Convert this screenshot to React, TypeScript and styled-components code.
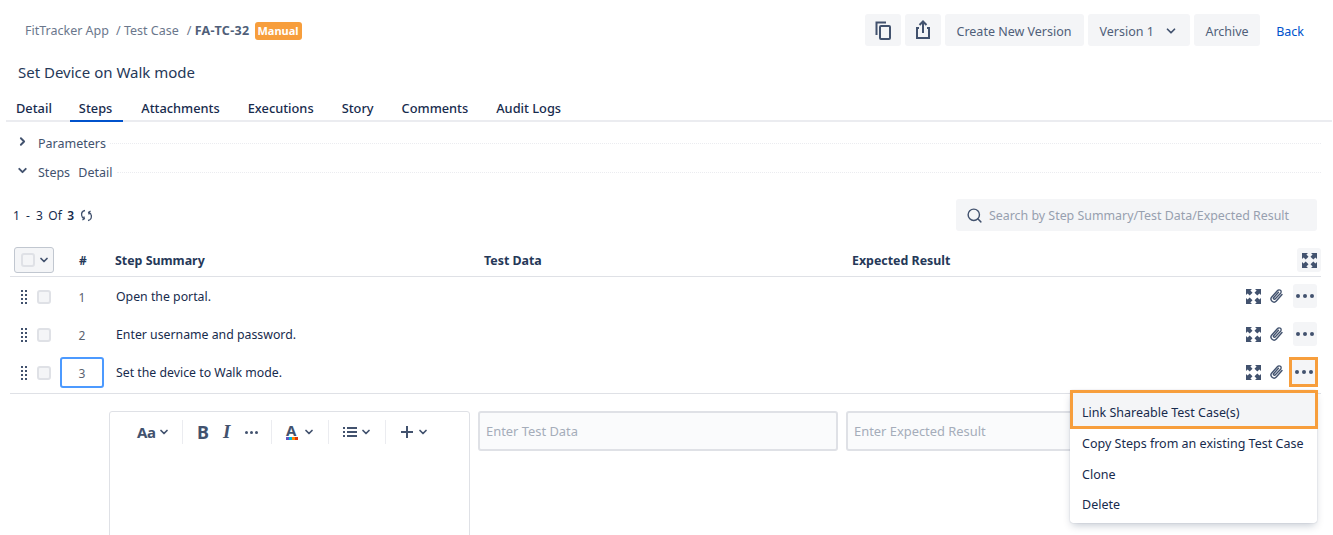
import React from "react";
import styled, { createGlobalStyle } from "styled-components";
import { ChevronDown, ChevronRight, Search } from "lucide-react";

const STEPS = ["Open the portal.", "Enter username and password.", "Set the device to Walk mode."];
const TABS = ["Detail", "Steps", "Attachments", "Executions", "Story", "Comments", "Audit Logs"];
const MENU = ["Link Shareable Test Case(s)", "Copy Steps from an existing Test Case", "Clone", "Delete"];
const COLOR_BAR = ["#6554c0", "#00b8d9", "#ff8b00", "#de350b"];

const CopyIcon = () => (
  <svg width="16" height="19" viewBox="0 0 16 19" fill="none" stroke="#42526e" strokeWidth="2">
    <rect x="5" y="5" width="10" height="13" rx="1" />
    <path d="M1.500 14V1.500H11" />
  </svg>
);

const ShareIcon = () => (
  <svg width="18" height="20" viewBox="0 0 18 20" fill="none" stroke="#42526e" strokeWidth="2">
    <path d="M5 8H3v10h12V8h-2" />
    <path d="M9 13V2M5.500 5L9 1.500 12.500 5" />
  </svg>
);

const ExpandIcon = () => (
  <svg width="15" height="15" viewBox="0 0 15 15" fill="#42526e">
    <path d="M0 0h6L4.400 1.600 6.500 3.700 3.700 6.500 1.600 4.400 0 6zM15 0v6l-1.600-1.600-2.100 2.100-2.800-2.800 2.100-2.100L9 0zM0 15V9l1.600 1.600 2.100-2.100 2.800 2.800-2.100 2.100L6 15zM15 15H9l1.600-1.600-2.100-2.100 2.800-2.800 2.100 2.100L15 9z" />
  </svg>
);

const ClipIcon = () => (
  <svg width="15" height="16" viewBox="0 0 14 16" fill="none" stroke="#42526e" strokeWidth="1.4" strokeLinecap="round">
    <path d="M12.500 6.500L6.800 13a3 3 0 0 1-4.500-4l5.800-6.500a2 2 0 0 1 3 2.700L5.600 11a1 1 0 0 1-1.500-1.300L9 4.200" />
  </svg>
);

const RefreshIcon = () => (
  <svg width="13" height="13" viewBox="0 0 13 13" fill="none" stroke="#42526e" strokeWidth="1.3">
    <path d="M5 1.500C2.500 2 1.200 4 1.700 6.500c.2 1.400 1 2.500 2.300 3.200M2.400 11l2-1.200-.6-2.300" />
    <path d="M8 11.500c2.500-.5 3.800-2.500 3.300-5-.2-1.400-1-2.500-2.300-3.200M10.600 2L8.600 3.200l.6 2.300" />
  </svg>
);

const ListIcon = () => (
  <svg width="14" height="12" viewBox="0 0 14 12" fill="#42526e">
    <path d="M0 1h2v2H0zM4 1h10v2H4zM0 5h2v2H0zM4 5h10v2H4zM0 9h2v2H0zM4 9h10v2H4z" />
  </svg>
);

const PlusIcon = () => (
  <svg width="14" height="14" viewBox="0 0 14 14" fill="#42526e">
    <path d="M6 1h2v5h5v2H8v5H6V8H1V6h5z" />
  </svg>
);

const App: React.FC = () => {
  return (
    <Page>
      <GlobalStyle />
      <TopBar>
        <Crumbs>
          <Crumb>FitTracker App</Crumb>
          <Crumb>/ Test Case</Crumb>
          <CrumbKey>
            <span>/</span> <b>FA-TC-32</b>
          </CrumbKey>
          <Badge>Manual</Badge>
        </Crumbs>
        <Actions>
          <IconButton>
            <CopyIcon />
          </IconButton>
          <IconButton>
            <ShareIcon />
          </IconButton>
          <Button>Create New Version</Button>
          <Button>
            Version 1
            <ChevronDown size={14} strokeWidth={3} color="#42526e" style={{ marginLeft: 10 }} />
          </Button>
          <ArchiveButton>Archive</ArchiveButton>
          <BackLink>Back</BackLink>
        </Actions>
      </TopBar>

      <Title>Set Device on Walk mode</Title>

      <Tabs>
        {TABS.map((tab) => (
          <Tab key={tab} $active={tab === "Steps"}>
            {tab}
          </Tab>
        ))}
      </Tabs>

      <Section $top={11}>
        <ChevronRight size={13} strokeWidth={3.5} color="#42526e" />
        <SectionName>Parameters</SectionName>
        <SectionRule />
      </Section>
      <Section $top={9}>
        <ChevronDown size={13} strokeWidth={3.5} color="#42526e" />
        <SectionName>Steps Detail</SectionName>
        <SectionRule />
      </Section>

      <ListBar>
        <Pager>
          <span>1 - 3</span>
          <span>Of</span>
          <b>3</b>
          <RefreshIcon />
        </Pager>
        <SearchBox>
          <Search size={17} color="#42526e" strokeWidth={2} />
          <span>Search by Step Summary/Test Data/Expected Result</span>
        </SearchBox>
      </ListBar>

      <Table>
        <HeadRow>
          <SelectAll>
            <Check />
            <ChevronDown size={12} strokeWidth={3.5} color="#42526e" />
          </SelectAll>
          <HeadNumber>#</HeadNumber>
          <HeadCell>Step Summary</HeadCell>
          <HeadCell>Test Data</HeadCell>
          <HeadCell>Expected Result</HeadCell>
          <HeadExpand>
            <ExpandIcon />
          </HeadExpand>
        </HeadRow>

        {STEPS.map((step, i) => {
          const last = i === STEPS.length - 1;
          return (
            <StepRow key={step} $last={last}>
              <Lead>
                <Grip />
                <Check />
              </Lead>
              <Number $active={last}>{i + 1}</Number>
              <Summary>{step}</Summary>
              <RowTools>
                <ExpandIcon />
                <ClipIcon />
                <MoreButton $highlight={last}>
                  <Dot />
                  <Dot />
                  <Dot />
                </MoreButton>
              </RowTools>
            </StepRow>
          );
        })}
      </Table>

      <EditRow>
        <Editor>
          <Toolbar>
            <ToolGroup $width={47} $first>
              <FontGlyph>Aa</FontGlyph>
              <ChevronDown size={12} strokeWidth={3.5} color="#42526e" />
            </ToolGroup>
            <ToolGroup $width={89}>
              <BoldGlyph>B</BoldGlyph>
              <ItalicGlyph>I</ItalicGlyph>
              <Dot $small />
              <Dot $small />
              <Dot $small />
            </ToolGroup>
            <ToolGroup $width={57}>
              <ColorGlyph>
                A
                <ColorBar>
                  {COLOR_BAR.map((c) => (
                    <ColorChip key={c} $color={c} />
                  ))}
                </ColorBar>
              </ColorGlyph>
              <ChevronDown size={12} strokeWidth={3.5} color="#42526e" />
            </ToolGroup>
            <ToolGroup $width={57}>
              <ListIcon />
              <ChevronDown size={12} strokeWidth={3.5} color="#42526e" />
            </ToolGroup>
            <ToolGroup $width={57} $last>
              <PlusIcon />
              <ChevronDown size={12} strokeWidth={3.5} color="#42526e" />
            </ToolGroup>
          </Toolbar>
        </Editor>
        <FieldInput>Enter Test Data</FieldInput>
        <FieldInput>Enter Expected Result</FieldInput>
      </EditRow>

      <Menu>
        {MENU.map((item, i) => (
          <MenuItem key={item} $highlight={i === 0}>
            {item}
          </MenuItem>
        ))}
      </Menu>
    </Page>
  );
};

export default App;

const GlobalStyle = createGlobalStyle`
  html, body {
    margin: 0;
    background: #fff;
    overflow: hidden;
  }
  body {
    font-family: "Noto Sans", "Open Sans", sans-serif;
    font-size: 12.5px;
    color: #172b4d;
  }
`;

const Page = styled.div`
  position: relative;
  width: 1333px;
  height: 535px;
  overflow: hidden;
`;

const TopBar = styled.div`
  display: flex;
  justify-content: space-between;
  align-items: center;
  height: 32px;
  padding: 14px 16px 0 25px;
`;

const Crumbs = styled.div`
  display: flex;
  align-items: center;
  color: #6b778c;
  margin-top: 1px;
`;

const Crumb = styled.span`
  margin-right: 7px;
`;

const CrumbKey = styled.span`
  margin: 0 5px 0 1px;
  b {
    color: #505f79;
    font-weight: 700;
    letter-spacing: 0.35px;
  }
`;

const Badge = styled.span`
  background: #f79e3c;
  color: #fff;
  font-weight: 700;
  font-size: 11px;
  line-height: 18px;
  padding: 0 3px;
  border-radius: 3px;
`;

const Actions = styled.div`
  display: flex;
  align-items: center;
  gap: 4px;
`;

const Button = styled.div`
  display: flex;
  align-items: center;
  box-sizing: border-box;
  height: 32px;
  padding: 2px 12px 0;
  background: #f4f5f7;
  border-radius: 3px;
  color: #505f79;
`;

const IconButton = styled(Button)`
  width: 36px;
  padding: 0;
  justify-content: center;
`;

const ArchiveButton = styled(Button)`
  padding: 2px 11.500px 0;
`;

const BackLink = styled.a`
  color: #0052cc;
  margin-left: 12px;
  margin-right: 13px;
  padding-top: 2px;
`;

const Title = styled.div`
  font-size: 15px;
  line-height: 20px;
  color: #253858;
  padding: 16px 0 0 18px;
`;

const Tabs = styled.div`
  display: flex;
  gap: 8px;
  height: 29px;
  margin: 9px 1px 0 6px;
  border-bottom: 2px solid #ebecf0;
`;

const Tab = styled.div<{ $active: boolean }>`
  padding: 0 ${(props) => (props.$active ? "11px" : "10px")} 0 ${(props) => (props.$active ? "9px" : "10px")};
  font-size: 12.8px;
  line-height: 34px;
  font-weight: 500;
  color: #172b4d;
  height: 29px;
  border-bottom: 2px solid ${(props) => (props.$active ? "#0052cc" : "transparent")};
`;

const Section = styled.div<{ $top: number }>`
  display: flex;
  align-items: center;
  height: 20px;
  margin: ${(props) => props.$top}px 12px 0 16px;
  svg {
    margin-top: -3px;
    margin-right: 1px;
  }
`;

const SectionName = styled.span`
  margin: 0 4px 0 8px;
  word-spacing: 5px;
  color: #42526e;
`;

const SectionRule = styled.div`
  flex: 1;
  border-top: 1px dotted #ebecf0;
`;

const ListBar = styled.div`
  display: flex;
  justify-content: space-between;
  align-items: center;
  margin: 17px 16px 0 13px;
`;

const Pager = styled.div`
  display: flex;
  align-items: center;
  gap: 5.500px;
  font-size: 12px;
  word-spacing: 3px;
  color: #172b4d;
  b {
    font-weight: 600;
  }
`;

const SearchBox = styled.div`
  display: flex;
  align-items: center;
  gap: 6px;
  box-sizing: border-box;
  width: 361px;
  height: 32px;
  padding: 0 10px;
  background: #f4f5f7;
  border-radius: 3px;
  font-size: 12.4px;
  color: #97a0af;
`;

const Table = styled.div`
  margin: 13px 12px 0 10px;
`;

const HeadRow = styled.div`
  display: grid;
  grid-template-columns: 50px 44px 369px 368px 1fr 36px;
  align-items: center;
  height: 32px;
  border-bottom: 1px solid #dfe1e6;
`;

const SelectAll = styled.div`
  display: flex;
  align-items: center;
  justify-content: space-between;
  box-sizing: border-box;
  width: 40px;
  height: 26px;
  margin-left: 4px;
  margin-top: -1px;
  padding: 0 3px 0 6px;
  background: #f4f5f7;
  border: 1px solid #c1c7d0;
  border-radius: 3px;
`;

const Check = styled.div`
  box-sizing: border-box;
  width: 14px;
  height: 14px;
  background: #f4f5f7;
  border: 2px solid #dfe1e6;
  border-radius: 3px;
`;

const HeadNumber = styled.div`
  text-align: center;
  font-weight: 700;
  color: #253858;
  font-size: 12px;
  padding-left: 2px;
`;

const HeadCell = styled.div`
  font-size: 12.4px;
  font-weight: 700;
  color: #253858;
  padding-left: 11px;
`;

const HeadExpand = styled.div`
  display: flex;
  align-items: center;
  justify-content: center;
  justify-self: end;
  width: 24px;
  height: 24px;
  background: #f4f5f7;
  border-radius: 3px;
`;

const StepRow = styled.div<{ $last: boolean }>`
  display: grid;
  grid-template-columns: 50px 44px 1fr auto;
  align-items: center;
  height: 38px;
  ${(props) => props.$last && "padding-bottom: 2px; border-bottom: 1px solid #dfe1e6;"}
`;

const Lead = styled.div`
  display: flex;
  align-items: center;
  gap: 10px;
  padding: 1px 0 0 11px;
`;

const Grip = styled.div`
  width: 6px;
  height: 14px;
  background-image: radial-gradient(circle at 1.200px 1.200px, #42526e 1.200px, transparent 1.300px);
  background-size: 4px 4px;
`;

const Number = styled.div<{ $active: boolean }>`
  display: flex;
  align-items: center;
  justify-content: center;
  box-sizing: border-box;
  height: 31px;
  color: #5a6270;
  font-size: 12px;
  border-radius: 3px;
  padding-top: 2px;
  border: 2px solid ${(props) => (props.$active ? "#4c9aff" : "transparent")};
`;

const Summary = styled.div`
  padding-left: 12px;
  font-size: 12.3px;
  color: #172b4d;
`;

const RowTools = styled.div`
  display: flex;
  align-items: center;
  gap: 8px;
  padding-right: 4px;
`;

const MoreButton = styled.div<{ $highlight: boolean }>`
  display: flex;
  align-items: center;
  justify-content: center;
  gap: 3px;
  box-sizing: border-box;
  width: ${(props) => (props.$highlight ? "23px" : "24px")};
  height: 24px;
  margin: 0 ${(props) => (props.$highlight ? "2px" : "0")} 0 ${(props) => (props.$highlight ? "0" : "1px")};
  background: #f4f5f7;
  border-radius: 3px;
  ${(props) =>
    props.$highlight &&
    `
    box-shadow: 0 0 0 3px #f79e3c;
    border-radius: 0;
  `}
`;

const Dot = styled.i<{ $small?: boolean }>`
  display: block;
  width: ${(props) => (props.$small ? "3px" : "4px")};
  height: ${(props) => (props.$small ? "3px" : "4px")};
  margin-right: ${(props) => (props.$small ? "-1px" : "0")};
  border-radius: 50%;
  background: #42526e;
`;

const EditRow = styled.div`
  display: flex;
  align-items: flex-start;
  gap: 8px;
  margin: 17px 0 0 109px;
`;

const Editor = styled.div`
  box-sizing: border-box;
  width: 361px;
  height: 140px;
  border: 1px solid #dfe1e6;
  border-radius: 3px;
`;

const Toolbar = styled.div`
  display: flex;
  align-items: center;
  height: 24px;
  margin-top: 8px;
  padding-left: 27px;
`;

const ToolGroup = styled.div<{ $width: number; $first?: boolean; $last?: boolean }>`
  display: flex;
  align-items: center;
  gap: 3px;
  box-sizing: border-box;
  width: ${(props) => props.$width}px;
  height: 24px;
  padding-left: ${(props) => (props.$first ? "0" : "14px")};
  margin-left: ${(props) => (props.$first ? "0" : "0")};
  ${(props) => !props.$last && "border-right: 1px solid #ebecf0;"}
  &:first-child {
    width: 46px;
  }
`;

const FontGlyph = styled.span`
  font-size: 15px;
  font-weight: 700;
  color: #42526e;
  letter-spacing: -0.5px;
`;

const BoldGlyph = styled.span`
  font-size: 18px;
  font-weight: 700;
  color: #42526e;
  margin-right: 11px;
`;

const ItalicGlyph = styled.span`
  font-family: "Liberation Serif", serif;
  font-style: italic;
  font-size: 19px;
  font-weight: 700;
  color: #42526e;
  margin-right: 12px;
`;

const ColorGlyph = styled.span`
  display: block;
  width: 12px;
  margin: -3px 2px 0 0;
  font-size: 15px;
  font-weight: 700;
  line-height: 18px;
  color: #42526e;
`;

const ColorBar = styled.span`
  display: flex;
  width: 12px;
  height: 3px;
  margin-top: -2px;
`;

const ColorChip = styled.span<{ $color: string }>`
  flex: 1;
  background: ${(props) => props.$color};
`;

const FieldInput = styled.div`
  display: flex;
  align-items: center;
  box-sizing: border-box;
  width: 360px;
  height: 40px;
  padding: 0 6px;
  background: #fafbfc;
  border: 2px solid #dfe1e6;
  border-radius: 3px;
  font-size: 12.9px;
  color: #a5adba;
`;

const Menu = styled.div`
  position: absolute;
  top: 390px;
  left: 1070px;
  width: 247px;
  height: 133px;
  background: #fff;
  border-radius: 3px;
  box-shadow: 0 4px 8px -2px rgba(9, 30, 66, 0.25), 0 0 1px rgba(9, 30, 66, 0.31);
`;

const MenuItem = styled.div<{ $highlight: boolean }>`
  display: flex;
  align-items: center;
  box-sizing: border-box;
  height: ${(props) => (props.$highlight ? "39px" : "30.7px")};
  padding-left: ${(props) => (props.$highlight ? "9px" : "12px")};
  color: #172b4d;
  ${(props) =>
    props.$highlight &&
    `
    padding-top: 5px;
    margin: 0 -1px -1px 0;
    background: #f4f5f7;
    border: 3px solid #f79e3c;
  `}
`;
